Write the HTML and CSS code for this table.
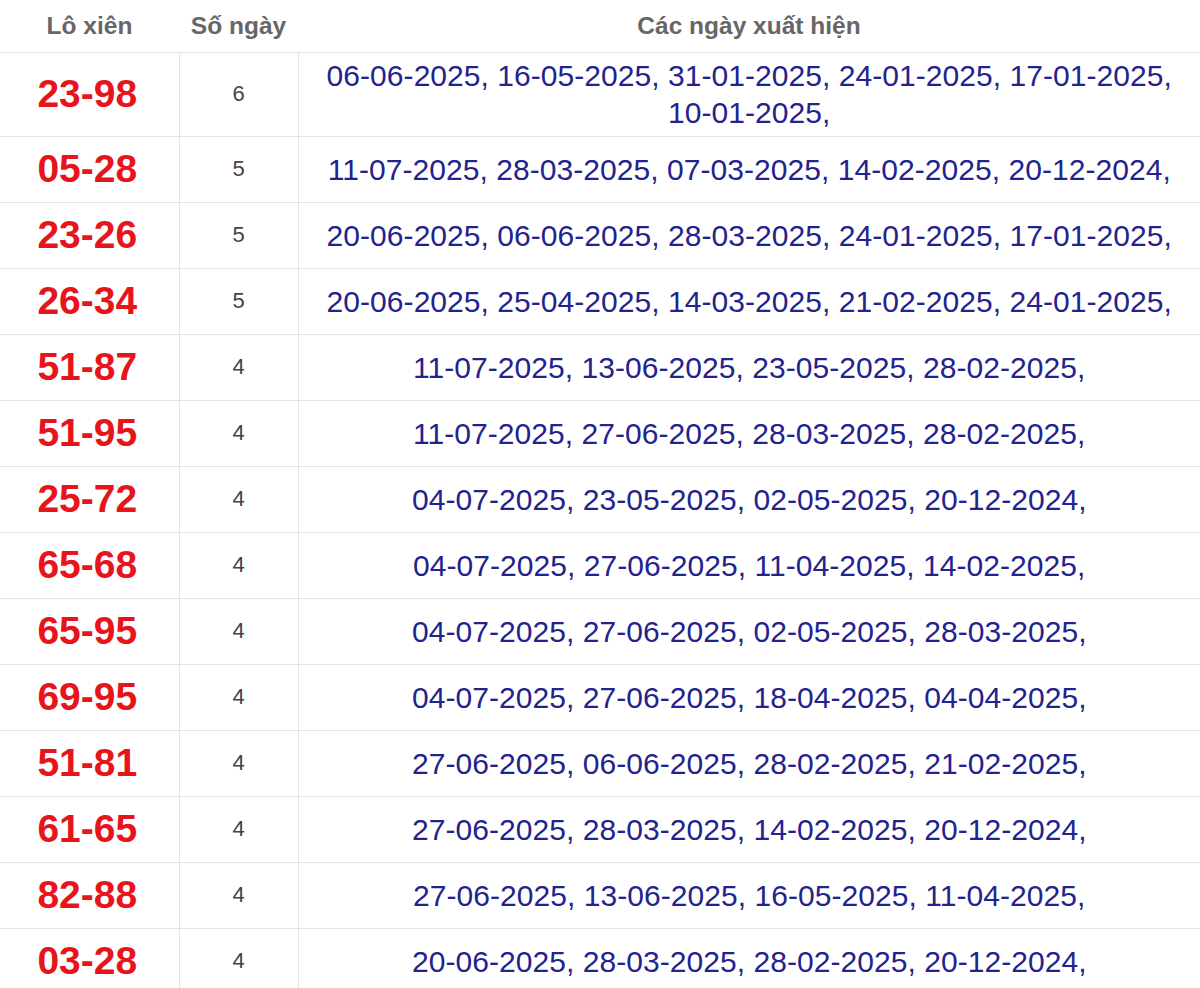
FILE: index.html
```html
<!DOCTYPE html>
<html lang="vi">
<head>
<meta charset="utf-8">
<title>Lô xiên</title>
<link rel="stylesheet" href="styles.css">
</head>
<body>
<table class="lx-table">
  <thead>
    <tr>
      <th class="col-pair">Lô xiên</th>
      <th class="col-count">Số ngày</th>
      <th class="col-dates">Các ngày xuất hiện</th>
    </tr>
  </thead>
  <tbody>
    <tr><td class="pair">23-98</td><td class="count">6</td><td class="dates"><span>06-06-2025,</span> <span>16-05-2025,</span> <span>31-01-2025,</span> <span>24-01-2025,</span> <span>17-01-2025,</span> <span>10-01-2025,</span></td></tr>
    <tr><td class="pair">05-28</td><td class="count">5</td><td class="dates"><span>11-07-2025,</span> <span>28-03-2025,</span> <span>07-03-2025,</span> <span>14-02-2025,</span> <span>20-12-2024,</span></td></tr>
    <tr><td class="pair">23-26</td><td class="count">5</td><td class="dates"><span>20-06-2025,</span> <span>06-06-2025,</span> <span>28-03-2025,</span> <span>24-01-2025,</span> <span>17-01-2025,</span></td></tr>
    <tr><td class="pair">26-34</td><td class="count">5</td><td class="dates"><span>20-06-2025,</span> <span>25-04-2025,</span> <span>14-03-2025,</span> <span>21-02-2025,</span> <span>24-01-2025,</span></td></tr>
    <tr><td class="pair">51-87</td><td class="count">4</td><td class="dates"><span>11-07-2025,</span> <span>13-06-2025,</span> <span>23-05-2025,</span> <span>28-02-2025,</span></td></tr>
    <tr><td class="pair">51-95</td><td class="count">4</td><td class="dates"><span>11-07-2025,</span> <span>27-06-2025,</span> <span>28-03-2025,</span> <span>28-02-2025,</span></td></tr>
    <tr><td class="pair">25-72</td><td class="count">4</td><td class="dates"><span>04-07-2025,</span> <span>23-05-2025,</span> <span>02-05-2025,</span> <span>20-12-2024,</span></td></tr>
    <tr><td class="pair">65-68</td><td class="count">4</td><td class="dates"><span>04-07-2025,</span> <span>27-06-2025,</span> <span>11-04-2025,</span> <span>14-02-2025,</span></td></tr>
    <tr><td class="pair">65-95</td><td class="count">4</td><td class="dates"><span>04-07-2025,</span> <span>27-06-2025,</span> <span>02-05-2025,</span> <span>28-03-2025,</span></td></tr>
    <tr><td class="pair">69-95</td><td class="count">4</td><td class="dates"><span>04-07-2025,</span> <span>27-06-2025,</span> <span>18-04-2025,</span> <span>04-04-2025,</span></td></tr>
    <tr><td class="pair">51-81</td><td class="count">4</td><td class="dates"><span>27-06-2025,</span> <span>06-06-2025,</span> <span>28-02-2025,</span> <span>21-02-2025,</span></td></tr>
    <tr><td class="pair">61-65</td><td class="count">4</td><td class="dates"><span>27-06-2025,</span> <span>28-03-2025,</span> <span>14-02-2025,</span> <span>20-12-2024,</span></td></tr>
    <tr><td class="pair">82-88</td><td class="count">4</td><td class="dates"><span>27-06-2025,</span> <span>13-06-2025,</span> <span>16-05-2025,</span> <span>11-04-2025,</span></td></tr>
    <tr><td class="pair">03-28</td><td class="count">4</td><td class="dates"><span>20-06-2025,</span> <span>28-03-2025,</span> <span>28-02-2025,</span> <span>20-12-2024,</span></td></tr>
  </tbody>
</table>
</body>
</html>
```
FILE: styles.css
```css
html, body {
  margin: 0;
  padding: 0;
  background: #ffffff;
}
body {
  font-family: "Liberation Sans", Arial, sans-serif;
  overflow: hidden;
}
.lx-table {
  width: 1200px;
  border-collapse: collapse;
  table-layout: fixed;
}
.col-pair { width: 179px; }
.col-count { width: 119px; }
.lx-table th {
  height: 52px;
  padding: 0;
  font-size: 24.5px;
  font-weight: bold;
  color: #666666;
  text-align: center;
  vertical-align: middle;
  border-bottom: 1px solid #e3e3e3;
}
.lx-table td {
  height: 66px;
  padding: 4px 0 5px;
  box-sizing: border-box;
  text-align: center;
  vertical-align: middle;
  border-bottom: 1px solid #e3e3e3;
}
.lx-table td + td {
  border-left: 1px solid #e3e3e3;
}
.lx-table td.pair {
  padding-right: 4px;
}
.pair {
  font-size: 39px;
  font-weight: bold;
  color: #e8141b;
  line-height: 44px;
}
.count {
  font-size: 22px;
  color: #444444;
}
.dates {
  font-size: 30px;
  line-height: 37px;
  color: #23238e;
  letter-spacing: 0.05px;
}
.dates span {
  white-space: nowrap;
}
```
